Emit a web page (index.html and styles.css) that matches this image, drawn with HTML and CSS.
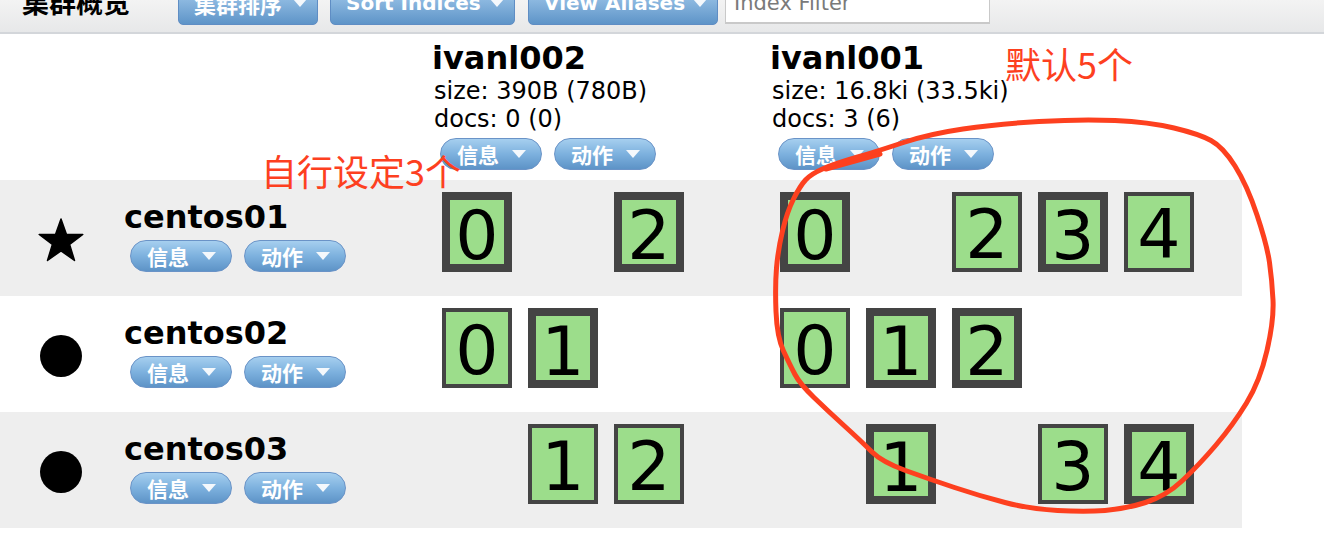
FILE: index.html
```html
<!DOCTYPE html>
<html lang="zh">
<head>
<meta charset="utf-8">
<title>集群概览</title>
<link rel="stylesheet" href="styles.css">
</head>
<body>
<div class="topbar">
  <div class="title">集群概览</div>
  <div class="tb-btn tb-sort-cluster"><span class="cjk">集群排序</span><span class="caret"></span></div>
  <div class="tb-btn tb-sort-indices">Sort Indices<span class="caret"></span></div>
  <div class="tb-btn tb-aliases">View Aliases<span class="caret"></span></div>
  <div class="filter">Index Filter</div>
</div>

<div class="cluster">
  <div class="header">
    <div class="node-col"></div>
    <div class="index-col col-a">
      <div class="idx-name">ivanl002</div>
      <div class="stat">size: 390B (780B)</div>
      <div class="stat">docs: 0 (0)</div>
      <div class="btns"><span class="btn">信息<span class="caret"></span></span><span class="btn">动作<span class="caret"></span></span></div>
    </div>
    <div class="index-col col-b">
      <div class="idx-name">ivanl001</div>
      <div class="stat">size: 16.8ki (33.5ki)</div>
      <div class="stat">docs: 3 (6)</div>
      <div class="btns"><span class="btn">信息<span class="caret"></span></span><span class="btn">动作<span class="caret"></span></span></div>
    </div>
  </div>

  <div class="row shade">
    <div class="node-col">
      <div class="icon"><svg class="star" viewBox="0 0 44 42" width="44" height="42"><polygon points="22,0 27.4,15.3 43.8,15.4 30.6,25.4 35.5,41.5 22,31.8 8.5,41.5 13.4,25.4 0.2,15.4 16.6,15.3" stroke="#000" stroke-width="1.5" stroke-linejoin="round"/></svg></div>
      <div class="node-info">
        <div class="node-name">centos01</div>
        <div class="btns"><span class="btn">信息<span class="caret"></span></span><span class="btn">动作<span class="caret"></span></span></div>
      </div>
    </div>
    <div class="index-col col-a shards">
      <div class="shard">0</div><div class="shard empty">1</div><div class="shard">2</div>
    </div>
    <div class="index-col col-b shards">
      <div class="shard">0</div><div class="shard empty">1</div><div class="shard rep">2</div><div class="shard">3</div><div class="shard rep">4</div>
    </div>
  </div>

  <div class="row">
    <div class="node-col">
      <div class="icon"><span class="dot"></span></div>
      <div class="node-info">
        <div class="node-name">centos02</div>
        <div class="btns"><span class="btn">信息<span class="caret"></span></span><span class="btn">动作<span class="caret"></span></span></div>
      </div>
    </div>
    <div class="index-col col-a shards">
      <div class="shard rep">0</div><div class="shard">1</div>
    </div>
    <div class="index-col col-b shards">
      <div class="shard rep">0</div><div class="shard">1</div><div class="shard">2</div>
    </div>
  </div>

  <div class="row shade">
    <div class="node-col">
      <div class="icon"><span class="dot"></span></div>
      <div class="node-info">
        <div class="node-name">centos03</div>
        <div class="btns"><span class="btn">信息<span class="caret"></span></span><span class="btn">动作<span class="caret"></span></span></div>
      </div>
    </div>
    <div class="index-col col-a shards">
      <div class="shard empty">0</div><div class="shard rep">1</div><div class="shard rep">2</div>
    </div>
    <div class="index-col col-b shards">
      <div class="shard empty">0</div><div class="shard">1</div><div class="shard empty">2</div><div class="shard rep">3</div><div class="shard">4</div>
    </div>
  </div>
</div>

<svg class="annot" viewBox="0 0 1324 558" width="1324" height="558">
  <path d="M826,169 L880,154"/>
  <path d="M903.5,142.5 Q878,151 856,157.5 Q834,164 822.5,169 Q811,174 805.5,180 Q800,186 793.5,199 Q787,212 782.5,231 Q778,250 776.5,268 Q775,286 776,311.5 Q777,337 783.5,351 Q790,365 795,374.5 Q800,384 814,397.5 Q828,411 844.5,426 Q861,441 871.5,451.5 Q882,462 905.5,470.5 Q929,479 954.5,487.5 Q980,496 1005,502.5 Q1030,509 1057.5,510.5 Q1085,512 1105,510.5 Q1125,509 1145.5,502.5 Q1166,496 1182.5,480.5 Q1199,465 1216,445 Q1233,425 1246.5,403 Q1260,381 1267,350.5 Q1274,320 1273,300 Q1272,280 1269.5,262.5 Q1267,245 1257,215 Q1247,185 1235,166 Q1223,147 1211,140.5 Q1199,134 1174,128 Q1149,122 1115,120.5 Q1081,119 1039,121.5 Q997,124 963,129 Q929,134 903.5,142.5"/>
</svg>
<div class="note note-a">自行设定3个</div>
<div class="note note-b">默认5个</div>
</body>
</html>
```

FILE: styles.css
```css
html, body {
  margin: 0;
  padding: 0;
  background: #fff;
}
body {
  width: 1324px;
  height: 558px;
  overflow: hidden;
  position: relative;
  font-family: "DejaVu Sans", "Noto Sans CJK SC", sans-serif;
  color: #000;
}

/* top bar */
.topbar {
  height: 32px;
  border-bottom: 2px solid #d3d6da;
  background: linear-gradient(#f3f3f3, #e7e8e9);
  display: flex;
  align-items: flex-start;
  overflow: hidden;
}
.title {
  margin: -13px 0 0 22px;
  width: 156px;
  font-size: 27px;
  line-height: 30px;
  font-weight: bold;
  font-family: "Noto Sans CJK SC", sans-serif;
}
.tb-btn {
  flex: none;
  margin-top: -15px;
  height: 40px;
  box-sizing: border-box;
  padding: 0 10px 0 15px;
  line-height: 34px;
  font-size: 20px;
  font-weight: bold;
  color: #fff;
  display: flex;
  align-items: flex-start;
  border: 1px solid #5f8dc4;
  border-radius: 5px;
  background: linear-gradient(#a7cdee, #5e94c8);
}
.tb-btn .caret {
  margin-top: 13px;
  margin-left: auto;
}
.tb-btn .cjk {
  font-family: "Noto Sans CJK SC", sans-serif;
  font-size: 22px;
}
.tb-sort-cluster {
  width: 140px;
  margin-right: 12px;
}
.tb-sort-indices {
  width: 185px;
  margin-right: 13px;
}
.tb-aliases {
  width: 190px;
  margin-right: 7px;
}
.filter {
  flex: none;
  margin-top: -15px;
  width: 265px;
  height: 39px;
  box-sizing: border-box;
  background: #fff;
  border: 1px solid #c9c9c9;
  border-bottom-width: 2px;
  padding-left: 8px;
  line-height: 34px;
  font-size: 21px;
  color: #7a7a7a;
}

.caret {
  display: inline-block;
  width: 0;
  height: 0;
  border-left: 7px solid transparent;
  border-right: 7px solid transparent;
  border-top: 8px solid #f4f8fc;
  margin-left: 13px;
}

/* cluster table */
.cluster {
  width: 1242px;
}
.header, .row {
  display: flex;
}
.header {
  height: 146px;
}
.row {
  height: 116px;
}
.row.shade {
  background: #eeeeee;
}
.node-col {
  width: 434px;
  flex: none;
  display: flex;
}
.index-col {
  flex: none;
}
.col-a {
  width: 338px;
}
.col-b {
  width: 470px;
}
.header .index-col {
  padding-top: 6px;
  margin-left: -2px;
  margin-right: 2px;
}
.idx-name {
  font-size: 32px;
  line-height: 37px;
  font-weight: bold;
}
.stat {
  font-size: 24px;
  line-height: 28px;
  margin-left: 2px;
}
.header .btns {
  margin-top: 5px;
  margin-left: 8px;
}

.btns {
  display: flex;
  gap: 12px;
}
.btn {
  display: inline-flex;
  align-items: center;
  height: 32px;
  box-sizing: border-box;
  padding: 0 15px 0 16px;
  border: 1px solid #6a93c7;
  border-radius: 16px;
  background: linear-gradient(#a6cfef, #7db1de 50%, #5d93c7);
  color: #fff;
  font-size: 21px;
  font-weight: bold;
  font-family: "Noto Sans CJK SC", sans-serif;
}

/* node column */
.icon {
  width: 122px;
  height: 42px;
  margin-top: 39px;
  display: flex;
  justify-content: center;
  align-items: center;
}
.star {
  display: block;
  fill: #000;
  overflow: visible;
}
.dot {
  width: 42px;
  height: 42px;
  border-radius: 50%;
  background: #000;
}
.node-info {
  padding-top: 18px;
}
.node-name {
  font-size: 32px;
  line-height: 38px;
  font-weight: bold;
  margin-left: 2px;
}
.node-info .btns {
  margin-top: 4px;
  margin-left: 8px;
}

/* shards */
.shards {
  display: flex;
  align-items: flex-start;
  padding-top: 12px;
}
.shard {
  width: 70px;
  height: 80px;
  box-sizing: border-box;
  margin: 0 8px;
  border: 8px solid #444;
  background: #9cdd8b;
  font-size: 68px;
  line-height: 64px;
  padding-top: 4px;
  text-align: center;
  color: #000;
}
.shard.rep {
  border-width: 4px;
  line-height: 72px;
  padding-top: 3px;
}
.shard.empty {
  visibility: hidden;
}

/* annotations */
.annot {
  position: absolute;
  left: 0;
  top: 0;
  pointer-events: none;
  fill: none;
  stroke: #fd401f;
  stroke-width: 5;
  stroke-linecap: round;
  stroke-linejoin: round;
}
.note {
  position: absolute;
  font-family: "Noto Sans CJK SC", sans-serif;
  font-size: 36px;
  line-height: 36px;
  color: #fd401f;
  white-space: nowrap;
}
.note-a {
  left: 261px;
  top: 152px;
}
.note-b {
  left: 1005px;
  top: 45px;
}
```
